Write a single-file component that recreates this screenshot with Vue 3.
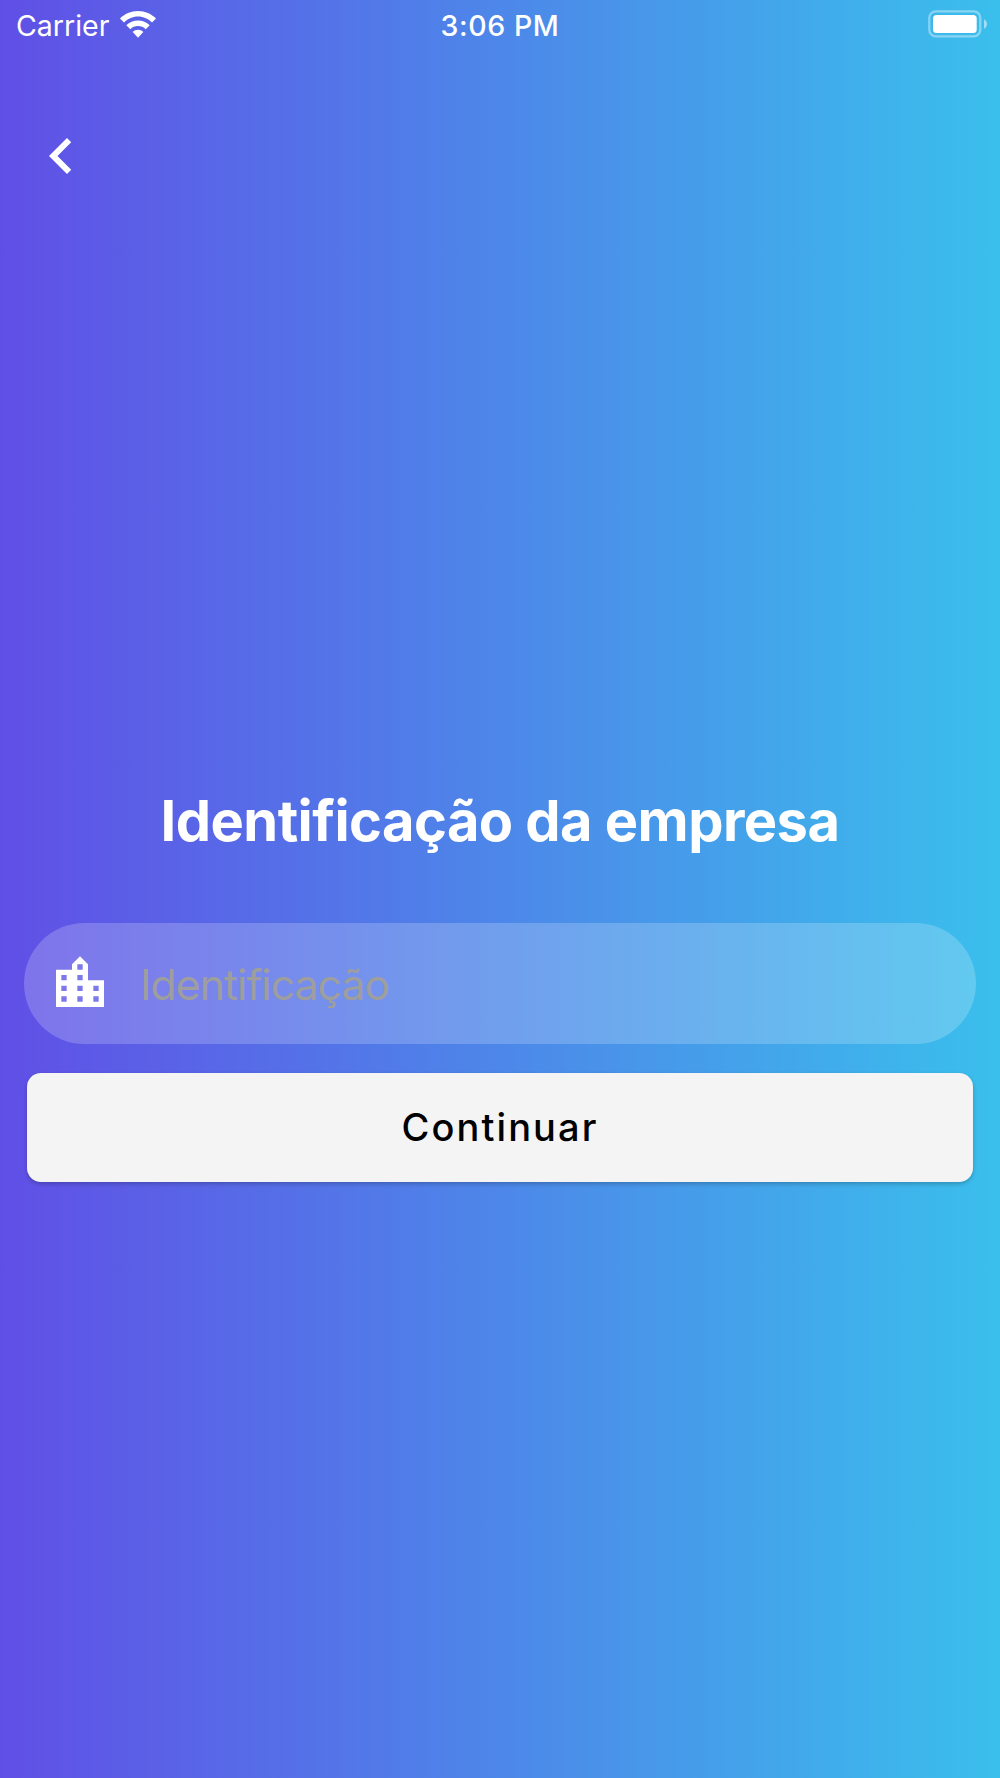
<template>
  <div class="screen">
    <header class="status-bar">
      <div class="carrier">
        <span>Carrier</span>
        <svg class="wifi" viewBox="0 0 36 27">
          <path d="M18 0C11 0 4.600 2.900 0 7.500L4 11.600C7.500 8 12.500 5.600 18 5.600S28.500 8 32 11.600L36 7.500C31.400 2.900 25 0 18 0Z" />
          <path d="M18 9.400C13.500 9.400 9.300 11.300 6.300 14.200L10.300 18.200C12.300 16.200 15 15 18 15S23.700 16.200 25.700 18.200L29.700 14.200C26.700 11.300 22.500 9.400 18 9.400Z" />
          <path d="M18 18.800C16 18.800 14.100 19.600 12.700 21L18 26.700L23.300 21C21.900 19.600 20 18.800 18 18.800Z" />
        </svg>
      </div>
      <span class="time">3:06 PM</span>
      <svg class="battery" viewBox="0 0 60 28">
        <rect x="1.300" y="1.300" width="51" height="25" rx="6.500" fill="none" stroke="#fff" stroke-opacity=".4" stroke-width="2.200" />
        <rect x="5" y="5" width="43.700" height="18" rx="3.500" fill="#fff" />
        <path d="M56 9.200C58 10.200 59 12 59 14S58 17.800 56 18.800Z" fill="#fff" fill-opacity=".5" />
      </svg>
    </header>

    <button class="back" aria-label="Voltar">
      <svg viewBox="0 0 24 24">
        <path d="M15.410 7.410L14 6l-6 6 6 6 1.410-1.410L10.830 12z" />
      </svg>
    </button>

    <form class="company-form" @submit.prevent>
      <h1 class="title">Identificação da empresa</h1>
      <label class="field">
        <svg viewBox="0 0 24 24">
          <path d="M15 11V5l-3-3-3 3v2H3v14h18V11h-6zm-8 8H5v-2h2v2zm0-4H5v-2h2v2zm0-4H5V9h2v2zm6 8h-2v-2h2v2zm0-4h-2v-2h2v2zm0-4h-2V9h2v2zm0-4h-2V5h2v2zm6 12h-2v-2h2v2zm0-4h-2v-2h2v2z" />
        </svg>
        <input v-model="company" type="text" placeholder="Identificação" />
      </label>
      <button class="submit" type="submit">Continuar</button>
    </form>
  </div>
</template>

<script setup>
import { ref } from 'vue'

const company = ref('')
</script>

<style>
body {
  margin: 0;
}
</style>

<style scoped>
.screen {
  box-sizing: border-box;
  height: 1778px;
  overflow: hidden;
  display: flex;
  flex-direction: column;
  background: linear-gradient(90deg, #604fe6, #3abfec);
  color: #fff;
  font-family: Inter, 'Liberation Sans', sans-serif;
}
.status-bar {
  display: grid;
  grid-template-columns: 1fr auto 1fr;
  align-items: center;
  height: 51px;
  padding: 0 12px 0 16px;
  font-size: 28.500px;
}
.carrier {
  display: flex;
  align-items: center;
  gap: 11px;
}
.wifi {
  width: 36px;
  height: 27px;
  margin-top: -3px;
  fill: #fff;
}
.time {
  margin: 0 4px 0 0;
  font-weight: 500;
  letter-spacing: 0.6px;
}
.battery {
  width: 60px;
  height: 28px;
  margin-top: -3px;
  justify-self: end;
}
.back {
  width: 72px;
  height: 72px;
  margin: 69px 0 0 25px;
  padding: 0;
  border: 0;
  background: none;
}
.back svg {
  display: block;
  fill: #fff;
}
.company-form {
  display: flex;
  flex-direction: column;
  margin-top: 595px;
}
.title {
  margin: 0;
  font-size: 56px;
  font-weight: 700;
  line-height: 68px;
  letter-spacing: -0.550px;
  text-align: center;
}
.field {
  display: flex;
  align-items: center;
  box-sizing: border-box;
  height: 121px;
  margin: 68px 24px 0;
  padding: 0 24px;
  border-radius: 61px;
  background: rgba(255, 255, 255, 0.2);
}
.field svg {
  width: 64px;
  height: 64px;
  margin-top: -2px;
  fill: #fff;
}
.field input {
  flex: 1;
  margin: 2px 0 0 28px;
  padding: 0;
  border: 0;
  outline: 0;
  background: none;
  color: #fff;
  font: 400 42.670px Inter, 'Liberation Sans', sans-serif;
  letter-spacing: -0.920px;
}
.field input::placeholder {
  color: #9e9e9e;
  opacity: 1;
}
.submit {
  height: 109px;
  margin: 29px 26.670px 0;
  padding: 0 0 2px;
  border: 0;
  border-radius: 14px;
  background: #f4f4f4;
  box-shadow: 0 2px 4px rgba(0, 0, 0, 0.22);
  color: #000;
  font: 500 38px Inter, 'Liberation Sans', sans-serif;
  letter-spacing: 2.100px;
}
</style>
